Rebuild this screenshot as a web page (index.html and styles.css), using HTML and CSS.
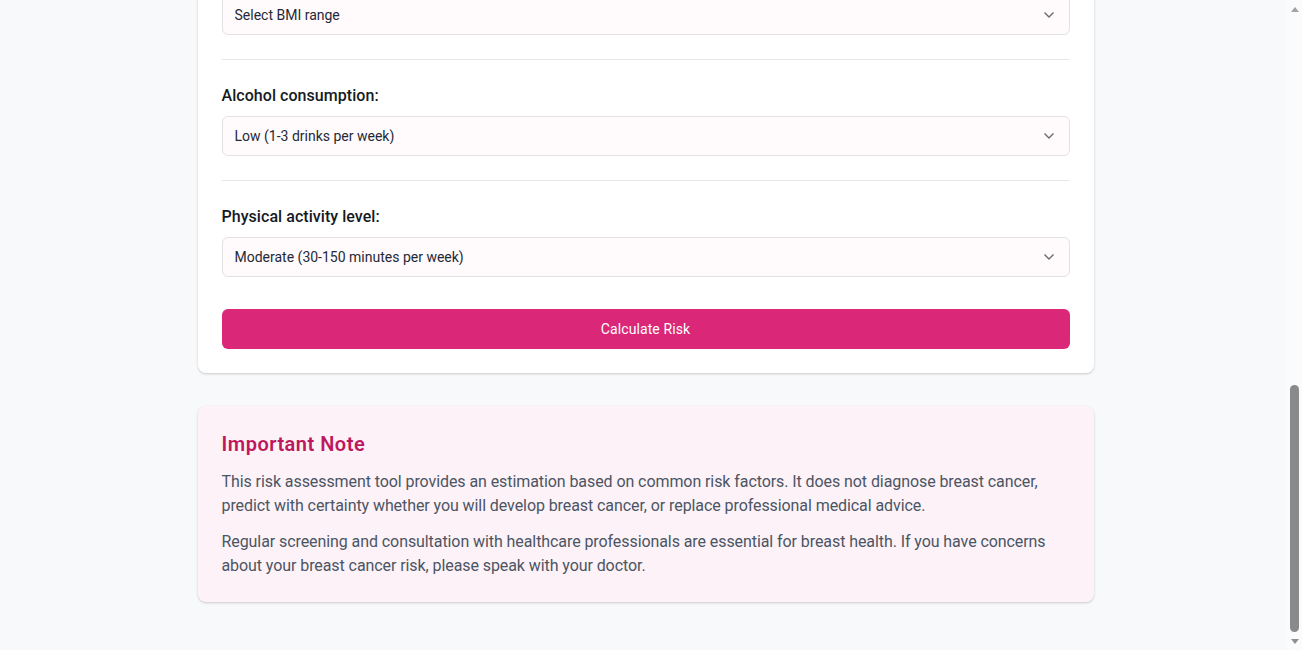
FILE: index.html
```
<!DOCTYPE html>
<html lang="en">
<head>
<meta charset="utf-8">
<title>Breast Cancer Risk Assessment</title>
<link rel="stylesheet" href="styles.css">
</head>
<body>
<main class="page">
  <section class="card">
    <div class="field">
      <div class="select-wrap">
        <select class="select" aria-label="Body Mass Index"><option>Select BMI range</option></select>
        <svg class="chev" width="12" height="8" viewBox="0 0 12 8"><path d="M1.5 1.5 6 6l4.5-4.5" fill="none" stroke="#6b6b6b" stroke-width="1.4"/></svg>
      </div>
    </div>
    <hr class="divider">

    <div class="field">
      <label class="label" for="alcohol">Alcohol consumption:</label>
      <div class="select-wrap">
        <select class="select" id="alcohol"><option>Low (1-3 drinks per week)</option></select>
        <svg class="chev" width="12" height="8" viewBox="0 0 12 8"><path d="M1.5 1.5 6 6l4.5-4.5" fill="none" stroke="#6b6b6b" stroke-width="1.4"/></svg>
      </div>
    </div>
    <hr class="divider">

    <div class="field">
      <label class="label" for="activity">Physical activity level:</label>
      <div class="select-wrap">
        <select class="select" id="activity"><option>Moderate (30-150 minutes per week)</option></select>
        <svg class="chev" width="12" height="8" viewBox="0 0 12 8"><path d="M1.5 1.5 6 6l4.5-4.5" fill="none" stroke="#6b6b6b" stroke-width="1.4"/></svg>
      </div>
    </div>

    <button class="btn" type="button">Calculate Risk</button>
  </section>

  <section class="note">
    <h3 class="note-title">Important Note</h3>
    <p class="note-text">This risk assessment tool provides an estimation based on common risk factors. It does not diagnose breast cancer, predict with certainty whether you will develop breast cancer, or replace professional medical advice.</p>
    <p class="note-text">Regular screening and consultation with healthcare professionals are essential for breast health. If you have concerns about your breast cancer risk, please speak with your doctor.</p>
  </section>
</main>

<div class="scrollbar" aria-hidden="true">
  <div class="sb-btn"><span class="arrow-up"></span></div>
  <div class="sb-track"><div class="sb-thumb"></div></div>
  <div class="sb-btn"><span class="arrow-down"></span></div>
</div>
<script src="script.js"></script>
</body>
</html>
```
FILE: styles.css
```
* { box-sizing: border-box; }
html { scroll-behavior: auto; }
body {
  margin: 0;
  padding: 0 15px 0 4px;
  background: #f8f9fa;
  font-family: Roboto, "Noto Sans", sans-serif;
  color: #1f2937;
}
.page {
  max-width: 896px;
  margin: 0 auto;
  padding: 32px 0 48px;
}
.card {
  background: #fff;
  border-radius: 8px;
  box-shadow: 0 1px 3px rgba(0,0,0,0.12), 0 1px 2px rgba(0,0,0,0.08);
  padding: 24px;
}
.field { display: flex; flex-direction: column; gap: 8px; }
.label {
  font-size: 16px;
  line-height: 24px;
  font-weight: 500;
  color: #151a22;
  letter-spacing: 0.05px;
}
.select-wrap { position: relative; }
.select {
  display: block;
  width: 100%;
  height: 40px;
  appearance: none;
  -webkit-appearance: none;
  background: #fffafb;
  border: 1px solid #e2e2e4;
  border-radius: 6px;
  padding: 0 36px 0 12px;
  font-family: Roboto, "Noto Sans", sans-serif;
  font-size: 14px;
  color: #1f2937;
}
.chev {
  position: absolute;
  right: 15px;
  top: 16px;
  pointer-events: none;
}
.divider {
  border: 0;
  border-top: 1px solid #e5e7eb;
  margin: 24px 0;
}
.btn {
  display: block;
  width: 100%;
  height: 40px;
  margin-top: 32px;
  border: 0;
  border-radius: 6px;
  background: #db2777;
  color: #fff;
  font-family: Roboto, "Noto Sans", sans-serif;
  font-size: 14px;
  letter-spacing: 0.1px;
}
.note {
  margin-top: 33px;
  background: #fdf2f8;
  border-radius: 8px;
  box-shadow: 0 1px 3px rgba(0,0,0,0.12), 0 1px 2px rgba(0,0,0,0.08);
  padding: 24px;
}
.note-title {
  margin: 0 0 12px;
  font-size: 20px;
  line-height: 28px;
  font-weight: 600;
  color: #be185d;
  letter-spacing: 0.5px;
}
.note-text {
  margin: 0 0 12px;
  font-size: 16px;
  line-height: 24px;
  color: #4b5563;
  letter-spacing: -0.08px;
}
.note-text:last-child { margin-bottom: 0; }

/* drawn window scrollbar */
.scrollbar {
  position: fixed;
  top: 0;
  right: 0;
  width: 15px;
  height: 100vh;
  background: #fbfbfb;
  display: flex;
  flex-direction: column;
}
.sb-btn {
  height: 15px;
  display: flex;
  align-items: center;
  justify-content: center;
}
.arrow-up {
  width: 0; height: 0;
  border-left: 4.5px solid transparent;
  border-right: 4.5px solid transparent;
  border-bottom: 5px solid #a3a3a3;
  margin-top: 3px;
}
.arrow-down {
  width: 0; height: 0;
  border-left: 4.5px solid transparent;
  border-right: 4.5px solid transparent;
  border-top: 5px solid #8f8f8f;
  margin-top: -3px;
}
.sb-track {
  flex: 1;
  display: flex;
  flex-direction: column;
  justify-content: flex-end;
  padding: 0 3px 3px;
}
.sb-thumb {
  height: 247px;
  border-radius: 5px;
  background: #8a8a8a;
}
```
FILE: script.js
```
window.scrollTo(0, document.documentElement.scrollHeight);
```
